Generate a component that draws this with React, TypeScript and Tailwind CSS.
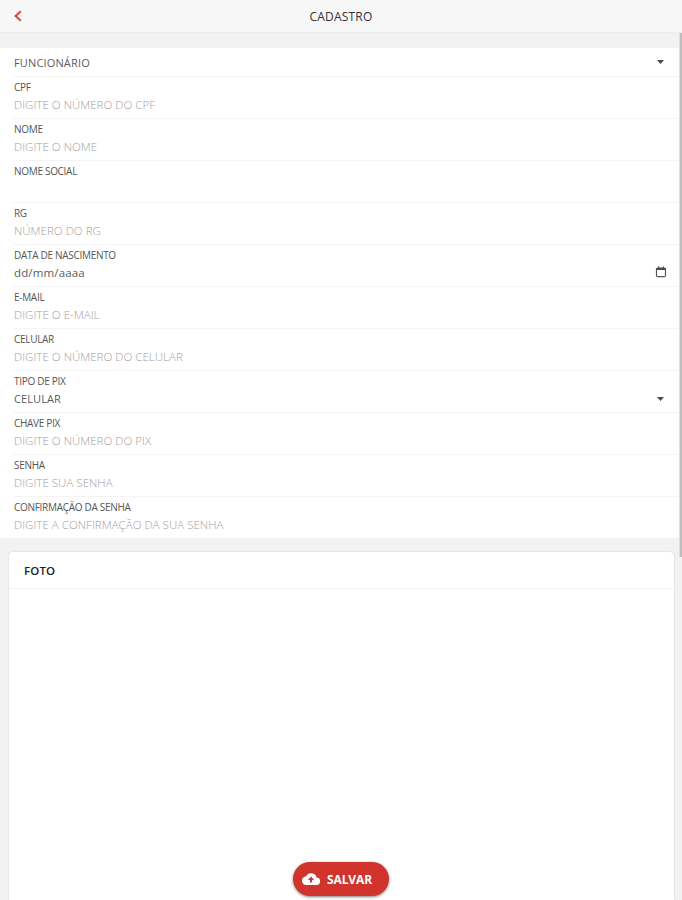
import clsx from 'clsx';

interface Field {
  label: string;
  placeholder?: string;
  value?: string;
  type?: 'select' | 'date';
}

const FIELDS: Field[] = [
  { label: 'CPF', placeholder: 'DIGITE O NÚMERO DO CPF' },
  { label: 'NOME', placeholder: 'DIGITE O NOME' },
  { label: 'NOME SOCIAL' },
  { label: 'RG', placeholder: 'NÚMERO DO RG' },
  { label: 'DATA DE NASCIMENTO', value: 'dd/mm/aaaa', type: 'date' },
  { label: 'E-MAIL', placeholder: 'DIGITE O E-MAIL' },
  { label: 'CELULAR', placeholder: 'DIGITE O NÚMERO DO CELULAR' },
  { label: 'TIPO DE PIX', value: 'CELULAR', type: 'select' },
  { label: 'CHAVE PIX', placeholder: 'DIGITE O NÚMERO DO PIX' },
  { label: 'SENHA', placeholder: 'DIGITE SUA SENHA' },
  { label: 'CONFIRMAÇÃO DA SENHA', placeholder: 'DIGITE A CONFIRMAÇÃO DA SUA SENHA' },
];

function Caret() {
  return (
    <svg className="mr-[18px] h-1 w-[7px] shrink-0" viewBox="0 0 7 4">
      <path d="M0 0h7L3.5 4z" fill="#4a4a4a" />
    </svg>
  );
}

function CalendarIcon() {
  return (
    <svg className="mb-[3px] mr-[15px] h-3 w-3 shrink-0" viewBox="0 0 12 12" fill="none">
      <rect x="1.5" y="2" width="9" height="8.7" rx="1.2" stroke="#555" strokeWidth="1.2" />
      <path d="M1.5 2h9v2h-9zM3 .6h1.2v2H3zM7.8.6H9v2H7.8z" fill="#4a4a4a" />
    </svg>
  );
}

function FieldRow({ field, last }: { field: Field; last: boolean }) {
  const { label, placeholder, value, type } = field;
  return (
    <div
      className={clsx(
        'ml-[13px] flex flex-col pl-px pt-0.5',
        last ? 'h-[41px]' : 'h-[42px] border-b border-[#f4f4f4]',
      )}
    >
      <div className="h-[17px] text-[10px] leading-4 tracking-[-0.3px] text-[#555]">{label}</div>
      <div className="flex h-[18px] items-center justify-between leading-[18px]">
        {value ? (
          <span
            className={clsx(
              'text-[#5c5c5c]',
              type === 'date' ? 'text-[11.5px] tracking-[0.15px]' : 'text-[11px] tracking-[0.1px]',
            )}
          >
            {value}
          </span>
        ) : (
          <span className="text-[11.5px] font-light tracking-[0.03px] text-[#a0a0a0]">
            {placeholder}
          </span>
        )}
        {type === 'select' && <Caret />}
        {type === 'date' && <CalendarIcon />}
      </div>
    </div>
  );
}

export default function App() {
  return (
    <div className="relative flex h-[900px] w-[682px] flex-col overflow-hidden bg-[#f2f2f2] font-['Open_Sans','Noto_Sans',sans-serif]">
      <header className="relative flex h-[33px] shrink-0 items-center justify-center border-b border-[#ececec] bg-[#f7f7f7]">
        <button className="absolute left-[14px] top-[10px]" aria-label="Voltar">
          <svg className="h-3 w-2" viewBox="0 0 8 12" fill="none">
            <path d="M6.8 1.2 1.6 6l5.2 4.8" stroke="#d4503c" strokeWidth="2.2" />
          </svg>
        </button>
        <h1 className="pt-px text-[12px] font-medium tracking-[0.2px] text-[#333]">CADASTRO</h1>
      </header>

      <main className="flex min-h-0 flex-1 flex-col pt-[15px]">
        <section className="shrink-0 bg-white">
          <div className="ml-[13px] flex h-[29px] items-center justify-between border-b border-[#f4f4f4] pl-px text-[11px] tracking-[0.15px] text-[#5c5c5c]">
            <span className="pt-0.5">FUNCIONÁRIO</span>
            <Caret />
          </div>
          {FIELDS.map((field, i) => (
            <FieldRow key={field.label} field={field} last={i === FIELDS.length - 1} />
          ))}
        </section>

        <section className="ml-[9px] mr-2 mt-[14px] flex-1 rounded-t bg-white shadow-[0_0_2px_rgba(0,0,0,0.18)]">
          <h2 className="flex h-[37px] items-center border-b border-[#f5f5f5] pl-[15px] pt-0.5 text-[11.5px] font-semibold tracking-[0.15px] text-[#222]">
            FOTO
          </h2>
        </section>
      </main>

      {/* scrollbar */}
      <div className="absolute right-0 top-[33px] h-[524px] w-[3px] border-l border-[#dedede] bg-[#bdbdbd]" />

      <button className="absolute left-[293px] top-[862px] flex h-[34px] w-24 items-center rounded-full bg-[#d1332d] pl-[9px] text-white shadow-[0_1px_3px_rgba(0,0,0,0.5)]">
        <svg className="h-[12px] w-[18px]" viewBox="0 0 18 12">
          <path
            d="M14.5 4.6A5.6 5.6 0 0 0 4.1 3.2 4.4 4.4 0 0 0 4.6 12h9.6a3.7 3.7 0 0 0 .3-7.4z"
            fill="#fff"
          />
          <path d="M9 3.6 5.9 6.9h2v2.6h2.2V6.9h2z" fill="#d1332d" />
        </svg>
        <span className="ml-[7px] pt-0.5 text-[12px] font-bold tracking-[-0.1px]">SALVAR</span>
      </button>
    </div>
  );
}
